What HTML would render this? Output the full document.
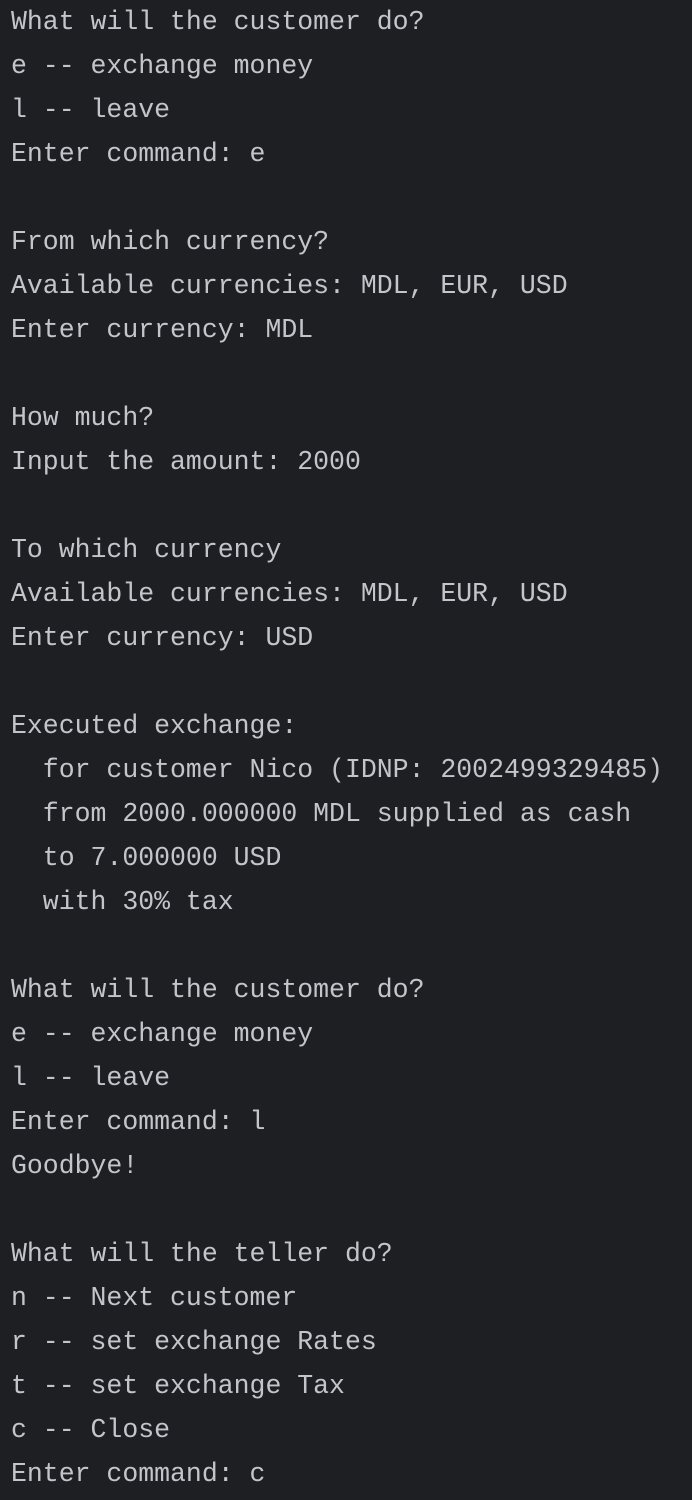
<!DOCTYPE html>
<html><head><meta charset="utf-8"><style>
html,body{margin:0;padding:0;background:#1e1f22;width:692px;height:1500px;overflow:hidden}
pre{margin:0;position:absolute;left:11px;top:0px;font-family:"Liberation Mono",monospace;font-size:26.5px;line-height:44px;color:#c3c5cb;white-space:pre}
</style></head><body><pre>What will the customer do?
e -- exchange money
l -- leave
Enter command: e

From which currency?
Available currencies: MDL, EUR, USD
Enter currency: MDL

How much?
Input the amount: 2000

To which currency
Available currencies: MDL, EUR, USD
Enter currency: USD

Executed exchange:
  for customer Nico (IDNP: 2002499329485)
  from 2000.000000 MDL supplied as cash
  to 7.000000 USD
  with 30% tax

What will the customer do?
e -- exchange money
l -- leave
Enter command: l
Goodbye!

What will the teller do?
n -- Next customer
r -- set exchange Rates
t -- set exchange Tax
c -- Close
Enter command: c</pre></body></html>
